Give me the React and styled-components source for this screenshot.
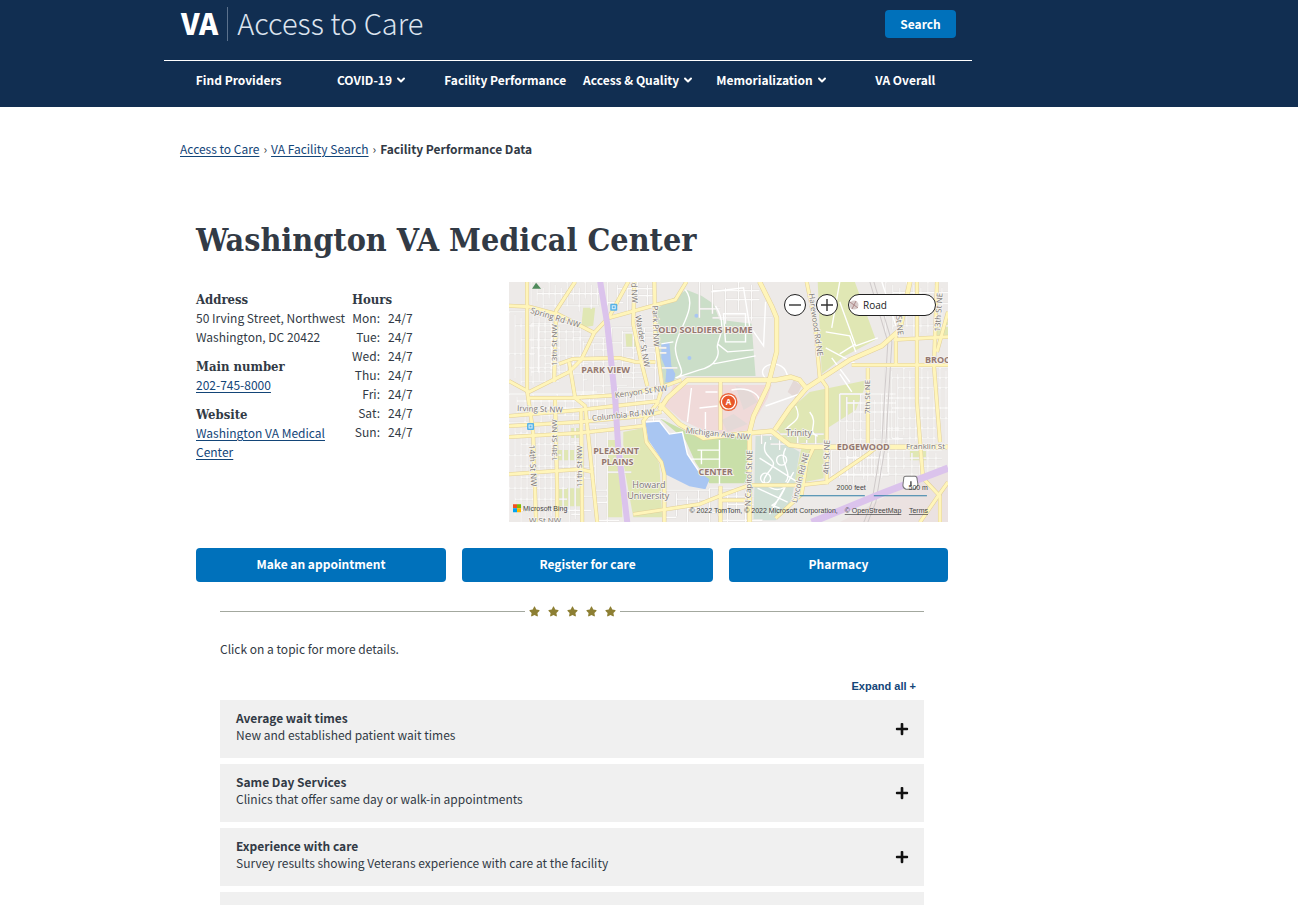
import React, { useState } from 'react';
import styled, { createGlobalStyle } from 'styled-components';
import { ChevronDown } from 'lucide-react';
import { FaPlus, FaStar, FaMinus } from 'react-icons/fa';

const navItems = [
  { label: 'Find Providers' },
  { label: 'COVID-19', menu: true },
  { label: 'Facility Performance' },
  { label: 'Access & Quality', menu: true },
  { label: 'Memorialization', menu: true },
  { label: 'VA Overall' },
];

const days = ['Mon', 'Tue', 'Wed', 'Thu', 'Fri', 'Sat', 'Sun'];

const topics = [
  { title: 'Average wait times', text: 'New and established patient wait times' },
  { title: 'Same Day Services', text: 'Clinics that offer same day or walk-in appointments' },
  { title: 'Experience with care', text: 'Survey results showing Veterans experience with care at the facility' },
  { title: 'Quality of care', text: 'How this facility compares with other hospitals' },
];

// blocks of side streets: x, y, width, height, column step, row step
const blocks = [
  [0, 30, 44, 70, 6, 14],
  [22, 0, 68, 24, 6, 12],
  [22, 42, 50, 52, 7, 8],
  [102, 46, 44, 54, 11, 5],
  [0, 112, 96, 26, 8, 7],
  [0, 140, 70, 98, 6, 11],
  [74, 142, 24, 96, 12, 6],
  [98, 0, 46, 24, 10, 7],
  [64, 56, 34, 64, 10, 6],
  [108, 106, 40, 30, 9, 6],
  [330, 112, 56, 84, 7, 9],
  [376, 86, 62, 74, 6, 10],
  [376, 0, 62, 52, 7, 11],
  [252, 152, 62, 10, 9, 10],
  [322, 168, 110, 26, 8, 8],
  [200, 206, 44, 32, 9, 8],
  [156, 208, 44, 30, 11, 9],
  [190, 0, 60, 36, 13, 9],
];

const mainRoads = [
  'M18 0V108L24 150L27 240',
  'M66 0L47 29L45 100M46 118L48 205V240',
  'M0 24L20 25L50 33L85 51',
  'M119 0L100 35L85 51L72 78L60 90L20 110L0 99',
  'M177 0L166 18L140 25L100 36',
  'M125 0L124 42L131 76L138 104',
  'M145 0L146 54L153 105L149 118',
  'M60 80L66 116L76 124L88 240',
  'M20 116L62 116L110 113L150 106L172 98',
  'M50 82L64 77L110 76L126 80H146',
  'M0 134L70 128L150 119',
  'M0 144L70 140L134 134L152 130',
  'M0 155L70 151L134 144',
  'M72 128L73 240',
  'M0 192L70 187L84 190',
  'M149 120L134 139L137 160L152 180L155 192V240',
  'M211 98V148M211 204V240M211 218H236',
  'M297 0L305 40L310 95L317 105V202',
  'M386 51V84M407 0V120L413 196L430 214V240M438 55L384 58M342 83H438M427 0L424 84L430 160',
  'M358 86V164',
  'M124 232L190 222L210 214L240 203H290L317 200L358 172L368 164',
  'M438 30L427 70M266 236L292 212L297 180L304 165',
  'M438 200L428 214L410 240',
];

// the wider streets around the hospital
const avenues = [
  'M150 128L158 116L178 98H266L281 95L290 98L298 108',
  'M150 122L170 142L194 156L240 151L262 149L280 163L297 165H438',
  'M250 0L262 24L267 36V70L258 105L244 134L240 150V240',
  'M400 0L390 48L372 64L340 78L297 106L280 126L265 148',
];

const App = () => {
  const [opened, setOpened] = useState(false);

  return (
    <>
      <GlobalStyle />
      <Header>
        <Container>
          <TopBar>
            <Logo href="#">
              <LogoMark>VA</LogoMark>
              <LogoName>Access to Care</LogoName>
            </Logo>
            <SearchButton type="button">Search</SearchButton>
          </TopBar>
          <Nav>
            {navItems.map((item) => (
              <NavLink href="#" key={item.label}>
                {item.label}
                {item.menu && <ChevronDown size={12} strokeWidth={4} />}
              </NavLink>
            ))}
          </Nav>
        </Container>
      </Header>

      <Container>
        <Breadcrumbs>
          <Link href="#">Access to Care</Link>
          <span>›</span>
          <Link href="#">VA Facility Search</Link>
          <span>›</span>
          <b>Facility Performance Data</b>
        </Breadcrumbs>

        <Main>
          <Title>Washington VA Medical Center</Title>
          <Facility>
            <Contact>
              <section>
                <SmallTitle>Address</SmallTitle>
                <p>50 Irving Street, Northwest</p>
                <p>Washington, DC 20422</p>
              </section>
              <section>
                <SmallTitle>Main number</SmallTitle>
                <p><Link href="#">202-745-8000</Link></p>
              </section>
              <section>
                <SmallTitle>Website</SmallTitle>
                <p><Link href="#">Washington VA Medical Center</Link></p>
              </section>
            </Contact>
            <Hours>
              <SmallTitle>Hours</SmallTitle>
              <HoursTable>
                <tbody>
                  {days.map((day) => (
                    <tr key={day}>
                      <th scope="row">{day}:</th>
                      <td>24/7</td>
                    </tr>
                  ))}
                </tbody>
              </HoursTable>
            </Hours>
            <MapBox>
              <FacilityMap />
              <MapControls>
                <RoundButton type="button" aria-label="Zoom out"><ZoomIcon /></RoundButton>
                <RoundButton type="button" aria-label="Zoom in"><ZoomIcon plus /></RoundButton>
                <RoadButton type="button">
                  <svg width="10" height="10" viewBox="0 0 10 10" aria-hidden="true">
                    <circle cx="5" cy="5" r="4.5" fill="#d8cccb" />
                    <path d="M1 2l8 6M3 9l4-8" stroke="#b08b8b" fill="none" />
                  </svg>
                  Road
                </RoadButton>
              </MapControls>
            </MapBox>
          </Facility>

          <Actions>
            <ActionButton type="button">Make an appointment</ActionButton>
            <ActionButton type="button">Register for care</ActionButton>
            <ActionButton type="button">Pharmacy</ActionButton>
          </Actions>

          <Topics>
            <Divider>
              <Stars>
                {[1, 2, 3, 4, 5].map((n) => <FaStar key={n} size={11} />)}
              </Stars>
            </Divider>
            <Intro>Click on a topic for more details.</Intro>
            <ExpandButton type="button" onClick={() => setOpened(!opened)}>Expand all +</ExpandButton>
            <TopicList>
              {topics.map((topic) => (
                <Topic type="button" key={topic.title} aria-expanded={opened}>
                  <TopicText>
                    <b>{topic.title}</b>
                    <br />
                    {topic.text}
                  </TopicText>
                  {opened ? <FaMinus size={14} /> : <FaPlus size={14} />}
                </Topic>
              ))}
            </TopicList>
          </Topics>
        </Main>
      </Container>
    </>
  );
};

const ZoomIcon = ({ plus }) => (
  <svg width="12" height="12" viewBox="0 0 12 12" aria-hidden="true">
    <path d={plus ? 'M0 6h12M6 0v12' : 'M0 6h12'} stroke="#333" strokeWidth="1.4" />
  </svg>
);

const sideStreets = blocks.map(([x, y, w, h, dx, dy]) => {
  let d = '';
  for (let i = 0, px = x; px <= x + w; px += dx, i++) d += `M${px} ${y + (i % 3) * 3}v${h - (i % 2) * 7}`;
  for (let i = 0, py = y; py <= y + h; py += dy, i++) d += `M${x + (i % 3) * dx} ${py}h${w - (i % 4) * dx}`;
  return d;
}).join('');

const FacilityMap = () => (
  <MapSvg viewBox="0 0 438 240" preserveAspectRatio="xMidYMid slice" role="img" aria-label="Map of the facility">
    <rect width="438" height="240" fill="#edeae8" />

    {/* parks and grounds */}
    <g fill="#e0e7b4">
      <path d="M308 0H345L366 58L335 74L312 92ZM74 26h12l-2 18l-12 2zM116 50l9 2l2 13h-10z" />
      <path d="M98 158H111L113 235H97ZM114 150L134 146L150 182L153 235H124L114 180Z" />
      <path d="M300 110L358 98L346 128L318 146V160L296 163H280L268 148L282 126ZM48 168H70V178H48ZM48 206H72V224H48ZM400 168h16v10h-16zM424 40h14v14h-14z" />
      <path d="M292 165H314V196L284 202ZM62 146h8v10h-8z" />
    </g>
    <path d="M177 8L192 14L204 22L210 38L242 42L246 94H172L155 103L148 60L146 28Z" fill="#cbdec8" />
    <path d="M164 103H262L258 116L240 148L202 152L172 138L156 124Z" fill="#f0dad9" />
    <path d="M226 104l14 4l8 12l-14 8zM284 98l8 6l-6 12l-8-6zM212 138l12-6l14 10l-20 8z" fill="#e4d9d7" />
    <path d="M150 136L166 144L194 158L240 153V201H200L186 180L176 158Z" fill="#c9dfa9" />
    <path d="M246 154L264 154L290 170L282 218L266 238H244Z" fill="#d1e0d7" />
    <path d="M380 212L438 186V240H330Z" fill="#ebe2e1" />
    <path d="M136 140L150 139L160 152L173 150L178 172L190 190L200 197L196 207L180 204L156 192L150 174L139 158Z" fill="#a9c6f2" />
    <path d="M152 62L160 60L162 84L166 92L164 101L156 100L157 88L152 76Z" fill="#a9c6f2" />
    <circle cx="187" cy="34" r="2" fill="#a9c6f2" />
    <circle cx="180" cy="76" r="2" fill="#a9c6f2" />

    <path d={sideStreets} stroke="#d9d5d2" strokeWidth="2" fill="none" />
    <path d={sideStreets} stroke="#fcfbfa" strokeWidth="1.3" fill="none" />
    <g fill="none" stroke="#fff" strokeWidth="1.4">
      <path d="M176 8C190 26 166 50 166 66S180 92 166 96M206 24C220 46 206 60 208 66S208 84 190 88L166 96M204 82L246 74M152 62L164 60M208 62L218 70L244 68M214 32H236V60H216Z" />
      <path d="M256 160C250 176 270 176 262 186S250 200 262 206S280 196 272 212S256 220 270 226M250 176L288 200M276 166C268 180 284 190 276 200M248 206L278 220M260 232L284 190" />
      <circle cx="272" cy="178" r="5" />
      <circle cx="256" cy="196" r="5" />
      <path d="M182 106L178 140M196 110H208M190 126L208 124M196 130V150M222 108C240 104 256 114 248 126M188 168H210M182 177H210M210 158V202M192 168V182M136 140L150 139L160 152L173 150L178 172L190 190" />
      <path d="M316 50L340 54L346 70M330 20L346 64L368 56M322 76L340 100M330 0L322 46M346 62L330 72M372 0L386 44M316 66L346 82" />
      <path d="M286 124C294 140 280 140 276 148M300 130C310 142 296 150 308 154M256 124L290 112M330 92L342 110M202 10L234 6L240 44L254 64L256 20M258 98C240 84 276 72 278 96" />
    </g>
    <g fill="none" stroke="#cfcaca">
      <path d="M360 0L378 60L372 160L362 220L354 240M364 0L382 60L376 160L366 220L358 240" />
    </g>

    <g fill="none" strokeLinejoin="round">
      {mainRoads.map((d) => <path key={d} d={d} stroke="#e2cf98" strokeWidth="4" />)}
      {avenues.map((d) => <path key={d} d={d} stroke="#e2cf98" strokeWidth="5" />)}
      {mainRoads.map((d) => <path key={d} d={d} stroke="#fff5ba" strokeWidth="3" />)}
      {avenues.map((d) => <path key={d} d={d} stroke="#fff5ba" strokeWidth="4" />)}
    </g>
    <path d="M91 0L98 42L106 118L109 165L118 240" fill="none" stroke="#dbc3ec" strokeWidth="6" />
    <path d="M438 186L370 212L302 240" fill="none" stroke="#dbc3ec" strokeWidth="7" />

    {/* street names */}
    <g fontSize="8" fill="#7d7773" stroke="#f7f5f2" strokeWidth="1.4" paintOrder="stroke">
      <text x="21" y="31" transform="rotate(17 21 31)">Spring Rd NW</text>
      <text x="48" y="84" transform="rotate(-90 48 84)">13th St NW</text>
      <text x="122" y="1" transform="rotate(88 122 1)">d NW</text>
      <text x="126" y="34" transform="rotate(80 126 34)">Warder St NW</text>
      <text x="143" y="24" transform="rotate(88 143 24)">Park Pl NW</text>
      <text x="106" y="116" transform="rotate(-8 106 116)">Kenyon St NW</text>
      <text x="8" y="129" transform="rotate(2 8 129)">Irving St NW</text>
      <text x="83" y="139" transform="rotate(-6 83 139)">Columbia Rd NW</text>
      <text x="20" y="163" transform="rotate(87 20 163)">14th St NW</text>
      <text x="48" y="179" transform="rotate(-90 48 179)">13th St NW</text>
      <text x="73" y="205" transform="rotate(-90 73 205)">11th St NW</text>
      <text x="20" y="241">W St NW</text>
      <text x="176" y="151" transform="rotate(6 176 151)">Michigan Ave NW</text>
      <text x="299" y="12" transform="rotate(82 299 12)">Harewood Rd NE</text>
      <text x="386" y="34" transform="rotate(84 386 34)">St NE</text>
      <text x="430" y="50" transform="rotate(-86 430 50)">13th St NE</text>
      <text x="360" y="132" transform="rotate(-90 360 132)">7th St NE</text>
      <text x="241" y="224" transform="rotate(-88 241 224)">N Capitol St NE</text>
      <text x="287" y="221" transform="rotate(-76 287 221)">Lincoln Rd NE</text>
      <text x="319" y="192" transform="rotate(-88 319 192)">4th St NE</text>
      <text x="396" y="167">Franklin St NE</text>
      <text x="276" y="154" fontSize="9">Trinity</text>
      <text x="123" y="206" fontSize="9">Howard</text>
      <text x="118" y="217" fontSize="9">University</text>
    </g>
    <g fontSize="9" fontWeight="700" fill="#957870" stroke="#f4f0ec" strokeWidth="2" paintOrder="stroke">
      <text x="149" y="51">OLD SOLDIERS HOME</text>
      <text x="72" y="91">PARK VIEW</text>
      <text x="84" y="172">PLEASANT</text>
      <text x="92" y="183">PLAINS</text>
      <text x="189" y="193">CENTER</text>
      <text x="327" y="168">EDGEWOOD</text>
      <text x="415" y="81">BROOKLAND</text>
    </g>

    {/* markers */}
    <path d="M27 1l5 6h-9z" fill="#4f8a5b" />
    <g>
      <rect x="101" y="22" width="7" height="7" rx="1" fill="#57b3e6" />
      <rect x="18" y="141" width="7" height="7" rx="1" fill="#57b3e6" />
      <path d="M103 24h3v3h-3zM20 143h3v3h-3z" fill="none" stroke="#dff1fb" />
    </g>
    <circle cx="219" cy="120" r="9" fill="#e8663d" />
    <circle cx="219" cy="120" r="7" fill="#e8562a" stroke="#fff" strokeWidth="1.2" />
    <text x="219" y="123" textAnchor="middle" fontSize="8" fontWeight="700" fill="#fff">A</text>
    <path d="M394 195q0-1 2-1h9q2 0 2 2l1 6q0 2-2 3l-1 2h-9q-3-1-3-4z" fill="#fff" stroke="#777" />
    <path d="M401 199v5" stroke="#444" strokeWidth="1.4" />

    {/* scale and credits */}
    <path d="M290 213.500H355M364 213.500H417" stroke="#2f7fa6" />
    <rect x="4" y="222" width="4" height="4" fill="#f25022" />
    <rect x="8" y="222" width="4" height="4" fill="#7fba00" />
    <rect x="4" y="226" width="4" height="4" fill="#00a4ef" />
    <rect x="8" y="226" width="4" height="4" fill="#ffb900" />
    <g fontFamily="Liberation Sans, Arial, sans-serif" fontSize="7" fill="#444">
      <text x="356" y="208" textAnchor="end">2000 feet</text>
      <text x="418" y="208" textAnchor="end">500 m</text>
      <text x="14" y="229">Microsoft Bing</text>
      <text x="180" y="231">© 2022 TomTom, © 2022 Microsoft Corporation,</text>
      <text x="335" y="231" textDecoration="underline">© OpenStreetMap</text>
      <text x="399" y="231" textDecoration="underline">Terms</text>
    </g>
  </MapSvg>
);

const GlobalStyle = createGlobalStyle`
* {
    box-sizing: border-box;
}

body {
    margin: 0;
    background-color: #fff;
    color: #323a45;
    font-family: "Noto Sans CJK SC", "Open Sans", sans-serif;
    font-size: 12px;
    line-height: 19px;
    overflow: hidden;
}

button {
    font-family: inherit;
    cursor: pointer;
}

p {
    margin: 0;
}
`;

const Header = styled.header`
background-color: #112e51;
height: 107px;
color: #fff;
`;

const Container = styled.div`
max-width: 972px;
padding-left: 164px;
`;

const TopBar = styled.div`
height: 61px;
display: flex;
align-items: flex-start;
justify-content: space-between;
padding: 7px 16px 0 17px;
border-bottom: 1px solid #fff;
`;

const Logo = styled.a`
display: flex;
align-items: center;
color: #fff;
text-decoration: none;
font-size: 29px;
line-height: 30px;
`;

const LogoMark = styled.span`
font-weight: 900;
padding: 0 9px 4px 0;
`;

const LogoName = styled.span`
font-weight: 300;
color: #dce4ef;
border-left: 1px solid #5b718c;
padding: 0 0 4px 9px;
`;

const SearchButton = styled.button`
width: 71px;
height: 28px;
margin-top: 3px;
padding: 0 0 2px;
border: none;
border-radius: 4px;
background-color: #0071bb;
color: #fff;
font-size: 12px;
font-weight: 700;
`;

const Nav = styled.nav`
display: grid;
grid-template-columns: repeat(6, 1fr);
padding: 9px 0 0 8px;
`;

const NavLink = styled.a`
display: flex;
align-items: center;
justify-content: center;
gap: 3px;
color: #fff;
font-weight: 700;
white-space: nowrap;
text-decoration: none;
`;

const Breadcrumbs = styled.nav`
display: flex;
gap: 4px;
padding: 32px 16px 0;
`;

const Link = styled.a`
color: #134578;
text-decoration: underline;
text-underline-offset: 2px;
`;

const Main = styled.main`
padding: 62px 24px 0 32px;
`;

const Title = styled.h1`
margin: 0;
font-family: "DejaVu Serif Condensed", "DejaVu Serif", serif;
font-size: 32px;
font-weight: 700;
line-height: 40px;
`;

const SmallTitle = styled.h2`
margin: 0;
font-family: "DejaVu Serif Condensed", "DejaVu Serif", serif;
font-size: 13px;
font-weight: 700;
line-height: 17px;
`;

const Facility = styled.div`
display: grid;
grid-template-columns: 152px 1fr 439px;
column-gap: 4px;
padding-top: 22px;
`;

const Contact = styled.div`
display: flex;
flex-direction: column;
gap: 12px;
padding-top: 9px;
`;

const Hours = styled.section`
padding-top: 9px;
`;

const HoursTable = styled.table`
border-collapse: collapse;

th{
    padding: 0 8px 0 0;
    font-weight: 400;
    text-align: right;
}

td{
    padding: 0;
}
`;

const MapBox = styled.div`
position: relative;
height: 240px;
overflow: hidden;
`;

const MapSvg = styled.svg`
display: block;
width: 100%;
height: 100%;
font-family: "Open Sans", sans-serif;
`;

const MapControls = styled.div`
position: absolute;
top: 12px;
right: 12px;
display: flex;
align-items: center;
gap: 10px;
`;

const RoundButton = styled.button`
width: 22px;
height: 22px;
display: flex;
align-items: center;
justify-content: center;
padding: 0;
border: 1px solid #222;
border-radius: 50%;
background-color: #fff;
`;

const RoadButton = styled.button`
width: 88px;
height: 22px;
display: flex;
align-items: center;
gap: 4px;
padding: 0;
border: 1px solid #222;
border-radius: 11px;
background-color: #fff;
color: #222;
font-family: "Open Sans", sans-serif;
font-size: 10px;
`;

const Actions = styled.div`
display: grid;
grid-template-columns: 250fr 251fr 219fr;
gap: 16px;
padding-top: 26px;
`;

const ActionButton = styled.button`
height: 34px;
padding: 0 0 4px;
border: none;
border-radius: 4px;
background-color: #0071bb;
color: #fff;
font-size: 12px;
font-weight: 700;
`;

const Topics = styled.div`
display: flex;
flex-direction: column;
padding: 24px 24px 0;
`;

const Divider = styled.div`
display: flex;
align-items: center;
gap: 4px;
height: 11px;

&::before, &::after{
    content: "";
    flex: 1;
    height: 1px;
    background-color: #a3a89f;
}
`;

const Stars = styled.div`
display: flex;
gap: 8px;
color: #8d7f33;
`;

const Intro = styled.p`
padding-top: 22px;
`;

const ExpandButton = styled.button`
align-self: flex-end;
margin-top: 19px;
padding: 0 8px;
border: none;
background: none;
color: #134578;
font-family: "Liberation Sans", Arial, sans-serif;
font-size: 11px;
font-weight: 700;
line-height: 18px;
`;

const TopicList = styled.div`
display: flex;
flex-direction: column;
gap: 6px;
padding-top: 5px;
`;

const Topic = styled.button`
display: flex;
align-items: center;
justify-content: space-between;
height: 58px;
padding: 0 15px 0 16px;
border: none;
background-color: #f0f0f0;
color: #323a45;
font-size: 12px;
line-height: 17px;
text-align: left;

svg{
    color: #111;
}
`;

const TopicText = styled.span`
padding-bottom: 6px;
`;

export default App;
